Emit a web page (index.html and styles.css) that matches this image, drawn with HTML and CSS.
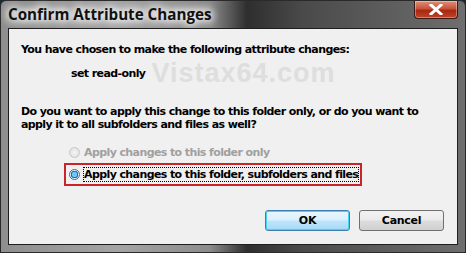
FILE: index.html
```html
<!DOCTYPE html>
<html>
<head>
<meta charset="utf-8">
<link rel="stylesheet" href="styles.css">
</head>
<body>
<div class="window">
  <div class="titlebar">
    <span class="title">Confirm Attribute Changes</span>
    <div class="close"><svg width="14" height="11" viewBox="0 0 14 11"><path d="M2 1 L12 10 M12 1 L2 10" stroke="#fff" stroke-width="3" stroke-linecap="square"/></svg></div>
  </div>
  <div class="client">
    <p class="line first">You have chosen to make the following attribute changes:</p>
    <div class="change-row">
      <span class="change">set read-only</span>
      <span class="watermark">Vistax64.com</span>
    </div>
    <p class="line question">Do you want to apply this change to this folder only, or do you want to apply it to all subfolders and files as well?</p>
    <div class="options">
      <label class="opt disabled"><span class="radio"></span>Apply changes to this folder only</label>
      <label class="opt selected"><span class="radio on"></span><span class="focus">Apply changes to this folder, subfolders and files</span></label>
    </div>
    <div class="buttons">
      <button class="btn default">OK</button>
      <button class="btn">Cancel</button>
    </div>
  </div>
</div>
</body>
</html>
```
FILE: styles.css
```css
html, body { margin: 0; padding: 0; background: #1a2a33; }
body { width: 466px; height: 253px; overflow: hidden; }
.window {
  width: 466px; height: 253px; box-sizing: border-box;
  background: linear-gradient(90deg, #8e8e8e 0%, #a4a4a4 25%, #8c8c8c 45%, #2e2e2e 53%, #4a4a4a 65%, #6e6e6e 100%);
  border: 1px solid #2a2a2a;
  border-radius: 6px 6px 0 0;
  padding: 0 7px 7px 7px;
  display: flex; flex-direction: column;
  font-family: "DejaVu Sans", sans-serif;
}
.titlebar {
  height: 27px; display: flex; align-items: flex-start; justify-content: space-between;
}
.title {
  font-family: "Open Sans", "DejaVu Sans", sans-serif;
  font-weight: 700; font-size: 15.2px; color: #111;
  padding: 3px 0 0 0;
  text-shadow: 0 0 8px #fff, 0 0 8px #fff, 0 0 10px #eee;
}
.close {
  width: 42px; height: 17px;
  border: 1px solid #3b1a16; border-top: none;
  border-radius: 0 0 4px 4px;
  background: linear-gradient(180deg, #e0907a 0%, #c8533a 45%, #a82810 55%, #be4228 100%);
  display: flex; align-items: center; justify-content: center;
  box-shadow: inset 0 0 0 1px rgba(255,255,255,0.35);
}
.client {
  flex: 1; background: #f0f0f0;
  border: 1px solid #1e1e1e;
  padding: 14px 0 0 12px;
  display: flex; flex-direction: column;
  font-family: "DejaVu Sans", sans-serif;
  font-size: 11px; font-weight: 700; color: #000;
  letter-spacing: -0.6px;
}
.line { margin: 0; line-height: 13px; }
.change-row { display: flex; align-items: center; height: 28px; margin-top: 3px; }
.change { margin-left: 50px; }
.watermark {
  margin-left: 6px; font-family: "Liberation Sans", Arial, sans-serif;
  font-size: 27px; font-weight: 700; color: #dedede; letter-spacing: 1px;
}
.question { margin-top: 18px; width: 420px; }
.options { display: flex; flex-direction: column; margin: 13px 0 0 45px; gap: 4px; align-items: flex-start; }
.opt { display: flex; align-items: center; height: 17px; white-space: nowrap; padding-left: 3px; }
.opt.disabled { color: #a0a0a0; }
.opt.selected {
  outline: 2px solid #c8242a; height: 19px; padding-right: 2px;
}
.radio {
  width: 11px; height: 11px; border-radius: 50%; box-sizing: border-box;
  border: 1px solid #c8c8c8; background: radial-gradient(circle, #f4f4f4, #dcdcdc);
  margin-right: 4px; flex: none;
}
.radio.on {
  border-color: #3c6a96;
  background: radial-gradient(circle, #6bc8ff 0 2.5px, #1f6bb0 3px 3.5px, #e8eef4 4px);
}
.focus { outline: 1px dotted #000; outline-offset: 0; }
.buttons {
  display: flex; justify-content: flex-end; gap: 9px; margin-top: auto; margin-bottom: 13px; margin-right: 13px;
}
.btn {
  width: 85px; height: 21px; font-family: "DejaVu Sans", sans-serif; font-size: 11px;
  font-weight: 700; color: #000; border-radius: 3px; padding: 0;
  border: 1px solid #707070;
  background: linear-gradient(180deg, #f2f2f2 0%, #ebebeb 48%, #dddddd 52%, #cfcfcf 100%);
  letter-spacing: -0.3px;
}
.btn.default {
  border-color: #3c7fb1;
  background: linear-gradient(180deg, #eaf6fd 0%, #d9f0fc 48%, #bee6fd 52%, #a7d9f5 100%);
  box-shadow: inset 0 0 0 1px #48d2f7;
}
```
